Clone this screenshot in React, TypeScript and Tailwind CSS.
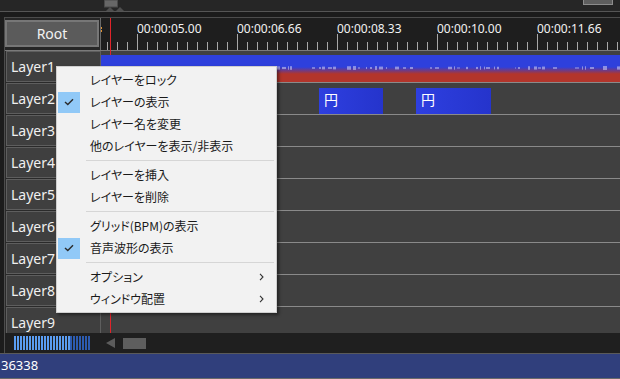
import React from 'react';

const LAYERS = ['Layer1', 'Layer2', 'Layer3', 'Layer4', 'Layer5', 'Layer6', 'Layer7', 'Layer8', 'Layer9'];
const LABELS = ['00:00:05.00', '00:00:06.66', '00:00:08.33', '00:00:10.00', '00:00:11.66'];

// deterministic noise for the audio waveform strip
let seed = 11;
const rnd = () => {
  seed = (seed * 9301 + 49297) % 233280;
  return seed / 233280;
};
const WAVE: { x: number; w: number; h: number }[] = [];
for (let x = 0; x < 519; ) {
  const w = 1 + Math.floor(rnd() * 4);
  const h = 1 + rnd() * 3;
  if (rnd() > 0.35) WAVE.push({ x, w, h });
  x += w + 1 + Math.floor(rnd() * 4);
}

const TICKS = Array.from({ length: 52 }, (_, i) => 6 + i * 10);

type Item = { label: string; checked?: boolean; sub?: boolean } | 'sep';

const MENU: Item[] = [
  { label: 'レイヤーをロック' },
  { label: 'レイヤーの表示', checked: true },
  { label: 'レイヤー名を変更' },
  { label: '他のレイヤーを表示/非表示' },
  'sep',
  { label: 'レイヤーを挿入' },
  { label: 'レイヤーを削除' },
  'sep',
  { label: 'グリッド(BPM)の表示' },
  { label: '音声波形の表示', checked: true },
  'sep',
  { label: 'オプション', sub: true },
  { label: 'ウィンドウ配置', sub: true },
];

function ContextMenu() {
  return (
    <div className="absolute left-[56px] top-[66px] w-[221px] bg-[#f2f2f2] border border-[#cfcfcf] py-[2px] shadow-[2px_2px_3px_rgba(0,0,0,0.45)] font-['Noto_Sans_CJK_JP',sans-serif] text-[12px] text-[#1a1a1a] [font-feature-settings:'palt'] z-30">
      {MENU.map((it, i) =>
        it === 'sep' ? (
          <div key={i} className="h-[7px] flex items-center">
            <div className="ml-[29px] mr-[2px] flex-1 h-px bg-[#d6d6d6]" />
          </div>
        ) : (
          <div key={i} className="h-[22px] flex items-center">
            <div className="ml-px w-[22px] h-[21px] flex items-center justify-center">
              {it.checked && (
                <div className="w-[22px] h-[21px] bg-[#91c9f7] flex items-center justify-center">
                  <svg width="10" height="8" viewBox="0 0 10 8">
                    <polyline points="1,4 3.8,6.6 9,1.2" fill="none" stroke="#2b2b2b" strokeWidth="1.4" />
                  </svg>
                </div>
              )}
            </div>
            <span className="ml-[10px] flex-1 leading-none">{it.label}</span>
            {it.sub && (
              <svg width="5" height="8" viewBox="0 0 5 8" className="mr-[12px]">
                <polyline points="1,0.8 4,4 1,7.2" fill="none" stroke="#333" strokeWidth="1.1" />
              </svg>
            )}
          </div>
        ),
      )}
    </div>
  );
}

function Ruler() {
  return (
    <div className="relative flex-1 min-w-0 h-[32px] bg-[#1e1e1e] overflow-hidden">
      <div className="flex pl-[36px] pt-[3px] text-[12px] leading-[16px] text-[#f2f2f2]">
        {LABELS.map((l) => (
          <span key={l} className="w-[100px] shrink-0">
            {l}
          </span>
        ))}
      </div>
      <svg width="519" height="32" className="absolute left-0 top-0">
        {TICKS.map((x) => {
          const major = (x - 36) % 100 === 0;
          return <line key={x} x1={x + 0.5} x2={x + 0.5} y1={major ? 16 : 24} y2={32} stroke="#a8a8a8" strokeWidth="1" />;
        })}
        <rect x="0" y="9" width="1" height="2" fill="#e09030" />
        <rect x="0" y="12" width="1" height="2" fill="#e09030" />
      </svg>
    </div>
  );
}

function TrackRow({ index }: { index: number }) {
  return (
    <div className="flex h-[32px] shrink-0">
      <div className="w-[96px] h-[32px] shrink-0 flex flex-col">
        <div className="ml-px h-[31px] border border-[#5e5e5e] bg-[#3f3f3f] flex items-center pl-[4px] text-[14px] text-[#f0f0f0]">
          {LAYERS[index]}
        </div>
      </div>
      <div className="flex-1 min-w-0 h-[32px] border-b border-[#8a8a8a] bg-[#404040] overflow-hidden">
        {index === 0 && (
          <div className="pt-[4px]">
            <div className="relative z-10 h-[27px] bg-[linear-gradient(to_bottom,#2e40dc_0px,#2e40dc_12px,#b3352b_19px,#b3352b_100%)]">
              <svg width="519" height="27" className="absolute left-0 top-0">
                {WAVE.map((s, i) => (
                  <rect key={i} x={s.x} y={13 - s.h / 2} width={s.w} height={s.h} fill="#c8c8ee" opacity="0.6" />
                ))}
              </svg>
            </div>
          </div>
        )}
        {index === 1 && (
          <div className="flex pt-[5px] font-['Noto_Sans_CJK_JP',sans-serif] text-[14px] text-white">
            <div className="ml-[218px] w-[64px] h-[26px] shrink-0 bg-[linear-gradient(to_right,#2e3fe0,#2534cc)] pl-[5px] leading-[22px]">円</div>
            <div className="ml-[33px] w-[75px] h-[26px] shrink-0 bg-[linear-gradient(to_right,#2e3fe0,#2534cc)] pl-[5px] leading-[22px]">円</div>
          </div>
        )}
      </div>
    </div>
  );
}

export default function App() {
  return (
    <div className="relative w-[620px] h-[379px] bg-[#262626] flex flex-col overflow-hidden font-['Noto_Sans',sans-serif]">
      {/* top scroll strip */}
      <div className="h-[11px] shrink-0 flex items-start justify-between">
        <svg width="22" height="11" className="ml-[104px]">
          <rect x="0.5" y="0" width="13" height="7" fill="#676767" stroke="#4a4a4a" />
          <polygon points="2,11 6,7 10,11" fill="#4e4e4e" />
          <polygon points="12,11 16,7 20,11" fill="#4e4e4e" />
        </svg>
        <div className="mr-[7px] w-[30px] h-[5px] bg-[#5e5e5e] border border-t-0 border-[#8c8c8c]" />
      </div>
      <div className="h-px shrink-0 bg-[#555]" />
      <div className="h-[5px] shrink-0 bg-[#1b1b1b]" />

      <div className="flex h-[336px] shrink-0">
        <div className="w-[4px] shrink-0 bg-[#1c1c1c]" />
        <div className="relative flex-1 min-w-0 flex flex-col border-l border-t border-[#4c4c4c] bg-[#2a2a2a]">
          {/* header */}
          <div className="flex h-[33px] border-b border-[#7a7a7a] shrink-0">
            <div className="w-[96px] shrink-0 border-r border-[#6a6a6a] bg-[#262626]">
              <div className="mt-[2px] w-[94px] h-[27px] border-2 border-[#777] bg-[#5b5b5b] flex items-center justify-center text-[14px] text-[#f2f2f2]">
                Root
              </div>
            </div>
            <Ruler />
          </div>

          {/* tracks */}
          <div className="h-[282px] overflow-hidden flex flex-col">
            {LAYERS.map((_, i) => (
              <TrackRow key={i} index={i} />
            ))}
          </div>

          {/* bottom bar */}
          <div className="h-[20px] shrink-0 bg-[#1f1f1f] flex items-center">
            <div className="ml-[9px] flex h-[14px]">
              <div className="w-[56px] bg-[repeating-linear-gradient(to_right,#5a9df2_0px,#5a9df2_2px,transparent_2px,transparent_3px)]" />
              <div className="w-[21px] bg-[repeating-linear-gradient(to_right,#2c5bb0_0px,#2c5bb0_2px,transparent_2px,transparent_3px)]" />
            </div>
            <svg width="9" height="10" className="ml-[15px]">
              <polygon points="9,0 0,5 9,10" fill="#5c5c5c" />
            </svg>
            <div className="ml-[8px] w-[23px] h-[11px] bg-[#5e5e5e]" />
          </div>

          {/* playhead */}
          <div className="absolute left-[105px] top-0 bottom-[20px] w-px bg-[#e0242a]" />
        </div>
      </div>

      {/* status bar */}
      <div className="h-[26px] shrink-0 border-t border-b border-t-[#5a5a5a] border-b-[#6a6a6a] bg-[#303f7c] flex items-center pl-[1px] text-[13px] text-white">
        36338
      </div>

      <ContextMenu />
    </div>
  );
}
